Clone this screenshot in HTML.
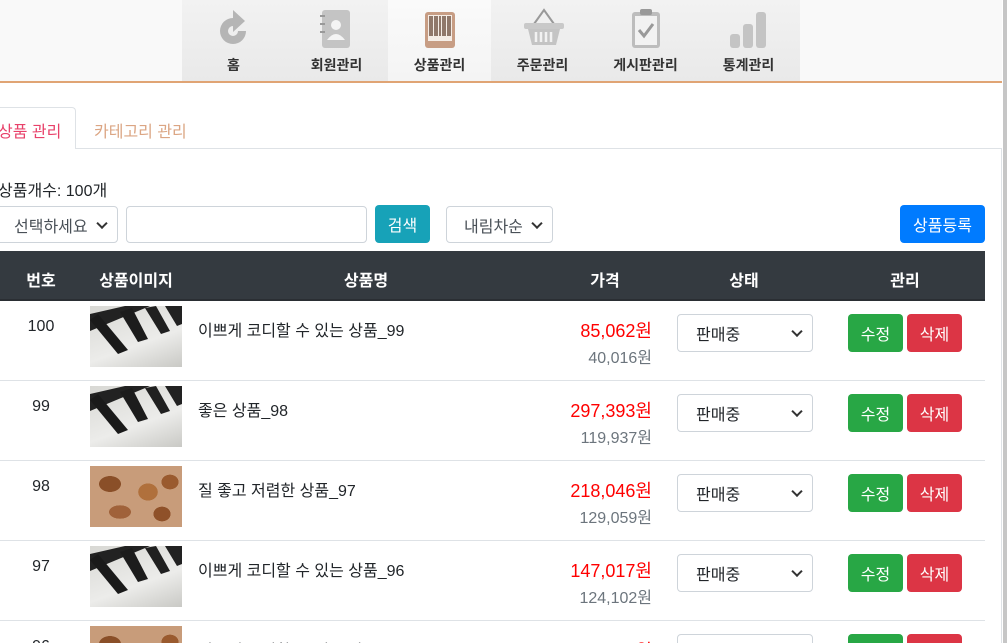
<!DOCTYPE html>
<html style="width:1007px;height:643px;overflow:hidden"><head><meta charset="utf-8"><style>
*{box-sizing:border-box;margin:0;padding:0}
body{width:1007px;height:643px;overflow:hidden;background:#fff;font-family:"Liberation Sans","Noto Sans CJK KR",sans-serif;color:#212529;position:relative;font-size:16px}
.a{position:absolute}
#hdr{left:0;top:0;width:1002px;height:83px;background:#f9f9f9;border-bottom:2px solid #e0a474}
.nav{top:0;height:81px;width:103px;background:linear-gradient(#f2f2f2,#e9e9e9);text-align:center}
.nav.on{background:linear-gradient(#fafafa,#f4f4f4)}
.nav span{position:absolute;left:0;right:0;top:55px;font-size:14px;font-weight:bold;color:#333}
.nav svg{position:absolute;left:31px;top:6px}
#sb{left:1003px;top:0;width:4px;height:643px;background:#c6c6c6}
.sel{border:1px solid #ced4da;border-radius:4px;background:#fff;color:#495057;padding-left:14px;display:flex;align-items:center}
.sel:after{content:"";position:absolute;right:11px;top:50%;width:6px;height:6px;border-right:2px solid #333;border-bottom:2px solid #333;transform:translateY(-70%) rotate(45deg)}
.btn{border-radius:4px;color:#fff;display:flex;align-items:center;justify-content:center;font-size:16px}
.th{top:251px;height:50px;left:0;width:985px;background:#343a40;border-bottom:2px solid #2a2e33}
.th div{position:absolute;top:16px;color:#fff;font-weight:bold;font-size:16px;transform:translateX(-50%)}
.row{left:0;width:985px;height:80px;border-bottom:1px solid #dee2e6}
.row .n{position:absolute;left:41px;top:17px;transform:translateX(-50%)}
.row .img{position:absolute;left:90px;top:5px;width:92px;height:61px;overflow:hidden}
.piano{background:linear-gradient(160deg,#d8d8d4 0%,#ececea 60%,#c9c9c5 100%)}
.coffee{background:radial-gradient(ellipse 18px 13px at 20px 18px,#8a4f28 60%,transparent 62%),radial-gradient(ellipse 16px 14px at 58px 26px,#b0703c 60%,transparent 62%),radial-gradient(ellipse 14px 12px at 80px 16px,#9a5a2e 60%,transparent 62%),radial-gradient(ellipse 18px 11px at 30px 46px,#a0623a 60%,transparent 62%),radial-gradient(ellipse 14px 12px at 72px 48px,#8f5129 60%,transparent 62%),#c89c7a}
.row .nm{position:absolute;left:198px;top:16px}
.row .p1{position:absolute;right:333px;top:16px;color:#ff0000;font-size:18px}
.row .p2{position:absolute;right:333px;top:43px;color:#6c757d}
.row .st{position:absolute;left:677px;top:13px;width:136px;height:38px;color:#212529;padding-left:18px}
.row .e{position:absolute;left:848px;top:13px;width:55px;height:38px;background:#28a745}
.row .d{position:absolute;left:907px;top:13px;width:55px;height:38px;background:#dc3545}
</style></head><body>
<div id="hdr" class="a"></div>
<div class="a nav" style="left:182px"><svg width="40" height="44" viewBox="0 0 40 44"><path d="M20 12a13 13 0 1 0 13 13h-8a5 5 0 1 1-5-5v6l12-11-12-11z" fill="#b5b5b5"/></svg><span>홈</span></div>
<div class="a nav" style="left:285px"><svg width="40" height="44" viewBox="0 0 40 44"><rect x="6" y="4" width="28" height="38" rx="3" fill="#c4c4c4"/><circle cx="20" cy="19" r="5" fill="#f4f4f4"/><path d="M11 34q9-12 18 0z" fill="#f4f4f4"/><rect x="4" y="9" width="5" height="2" fill="#999"/><rect x="4" y="17" width="5" height="2" fill="#999"/><rect x="4" y="25" width="5" height="2" fill="#999"/></svg><span>회원관리</span></div>
<div class="a nav on" style="left:388px"><svg width="40" height="44" viewBox="0 0 40 44"><rect x="6" y="6" width="30" height="36" rx="3" fill="#c79d84"/><rect x="9" y="9" width="24" height="26" fill="#f5ede6"/><path d="M11 10v20M13 10v20M16 10v20M18 10v20M21 10v20M24 10v20M26 10v20M29 10v20M31 10v20" stroke="#5a3a28" stroke-width="1.3"/></svg><span>상품관리</span></div>
<div class="a nav" style="left:491px"><svg width="44" height="44" viewBox="0 0 44 44"><path d="M12 18L22 4L32 18" stroke="#999" stroke-width="2" fill="none"/><rect x="2" y="17" width="40" height="6" rx="2" fill="#c9c9c9"/><path d="M6 23h32l-4 16H10z" fill="#c4c4c4"/><path d="M14 26v10M19 26v10M24 26v10M29 26v10" stroke="#f2f2f2" stroke-width="2.5"/></svg><span>주문관리</span></div>
<div class="a nav" style="left:594px"><svg width="40" height="44" viewBox="0 0 40 44"><rect x="7" y="6" width="28" height="36" rx="3" fill="#bdbdbd"/><rect x="10" y="10" width="22" height="29" fill="#f2f2f2"/><rect x="15" y="3" width="12" height="6" rx="2" fill="#999"/><path d="M14 24l5 6 9-12" stroke="#999" stroke-width="3" fill="none"/></svg><span>게시판관리</span></div>
<div class="a nav" style="left:697px"><svg width="44" height="44" viewBox="0 0 44 44"><rect x="2" y="28" width="10" height="14" rx="3" fill="#c4c4c4"/><rect x="15" y="18" width="10" height="24" rx="3" fill="#c4c4c4"/><rect x="28" y="6" width="10" height="36" rx="3" fill="#c4c4c4"/></svg><span>통계관리</span></div>
<div id="sb" class="a"></div>

<div class="a" style="left:76px;top:148px;width:926px;height:1px;background:#dee2e6"></div>
<div class="a" style="left:1001px;top:148px;width:1px;height:495px;background:#dee2e6"></div>
<div class="a" style="left:-5px;top:107px;width:81px;height:42px;border:1px solid #dee2e6;border-bottom:none;border-radius:4px 4px 0 0;background:#fff"></div>
<div class="a" style="left:-2px;top:118px;color:#e8416a">상품 관리</div>
<div class="a" style="left:94px;top:118px;color:#dba583">카테고리 관리</div>
<div class="a" style="left:-2px;top:177px">상품개수: 100개</div>
<div class="a sel" style="left:-10px;top:206px;width:128px;height:37px;padding-left:23px">선택하세요</div>
<div class="a" style="left:126px;top:206px;width:241px;height:37px;border:1px solid #ced4da;border-radius:4px"></div>
<div class="a btn" style="left:375px;top:205px;width:55px;height:38px;background:#17a2b8">검색</div>
<div class="a sel" style="left:446px;top:206px;width:107px;height:37px;padding-left:17px">내림차순</div>
<div class="a btn" style="left:900px;top:205px;width:85px;height:38px;background:#007bff">상품등록</div>

<div class="a th"><div style="left:41px">번호</div><div style="left:136px">상품이미지</div><div style="left:366px">상품명</div><div style="left:605px">가격</div><div style="left:744px">상태</div><div style="left:905px">관리</div></div>

<div class="a row" style="top:301px"><div class="n">100</div><div class="img piano"><svg width="92" height="61"><path d="M0 8L35 0L60 0L0 25z" fill="#222"/><path d="M0 14l28 34 10-4L8 8z" fill="#1a1a1a"/><path d="M30 6l18 30 10-3L42 2z" fill="#1c1c1c"/><path d="M55 2l16 26 9-3L66 0z" fill="#202020"/><path d="M75 0l12 20 5-2V0z" fill="#222"/></svg></div><div class="nm">이쁘게 코디할 수 있는 상품_99</div><div class="p1">85,062원</div><div class="p2">40,016원</div><div class="sel st">판매중</div><div class="btn e">수정</div><div class="btn d">삭제</div></div>
<div class="a row" style="top:381px"><div class="n">99</div><div class="img piano"><svg width="92" height="61"><path d="M0 8L35 0L60 0L0 25z" fill="#222"/><path d="M0 14l28 34 10-4L8 8z" fill="#1a1a1a"/><path d="M30 6l18 30 10-3L42 2z" fill="#1c1c1c"/><path d="M55 2l16 26 9-3L66 0z" fill="#202020"/><path d="M75 0l12 20 5-2V0z" fill="#222"/></svg></div><div class="nm">좋은 상품_98</div><div class="p1">297,393원</div><div class="p2">119,937원</div><div class="sel st">판매중</div><div class="btn e">수정</div><div class="btn d">삭제</div></div>
<div class="a row" style="top:461px"><div class="n">98</div><div class="img coffee"></div><div class="nm">질 좋고 저렴한 상품_97</div><div class="p1">218,046원</div><div class="p2">129,059원</div><div class="sel st">판매중</div><div class="btn e">수정</div><div class="btn d">삭제</div></div>
<div class="a row" style="top:541px"><div class="n">97</div><div class="img piano"><svg width="92" height="61"><path d="M0 8L35 0L60 0L0 25z" fill="#222"/><path d="M0 14l28 34 10-4L8 8z" fill="#1a1a1a"/><path d="M30 6l18 30 10-3L42 2z" fill="#1c1c1c"/><path d="M55 2l16 26 9-3L66 0z" fill="#202020"/><path d="M75 0l12 20 5-2V0z" fill="#222"/></svg></div><div class="nm">이쁘게 코디할 수 있는 상품_96</div><div class="p1">147,017원</div><div class="p2">124,102원</div><div class="sel st">판매중</div><div class="btn e">수정</div><div class="btn d">삭제</div></div>
<div class="a row" style="top:621px;height:22px;border-bottom:none;overflow:hidden"><div class="n">96</div><div class="img coffee"></div><div class="nm">이쁘게 코디할 수 있는 상품_95</div><div class="p1">155,064원</div><div class="sel st">판매중</div><div class="btn e">수정</div><div class="btn d">삭제</div></div>
</body></html>
